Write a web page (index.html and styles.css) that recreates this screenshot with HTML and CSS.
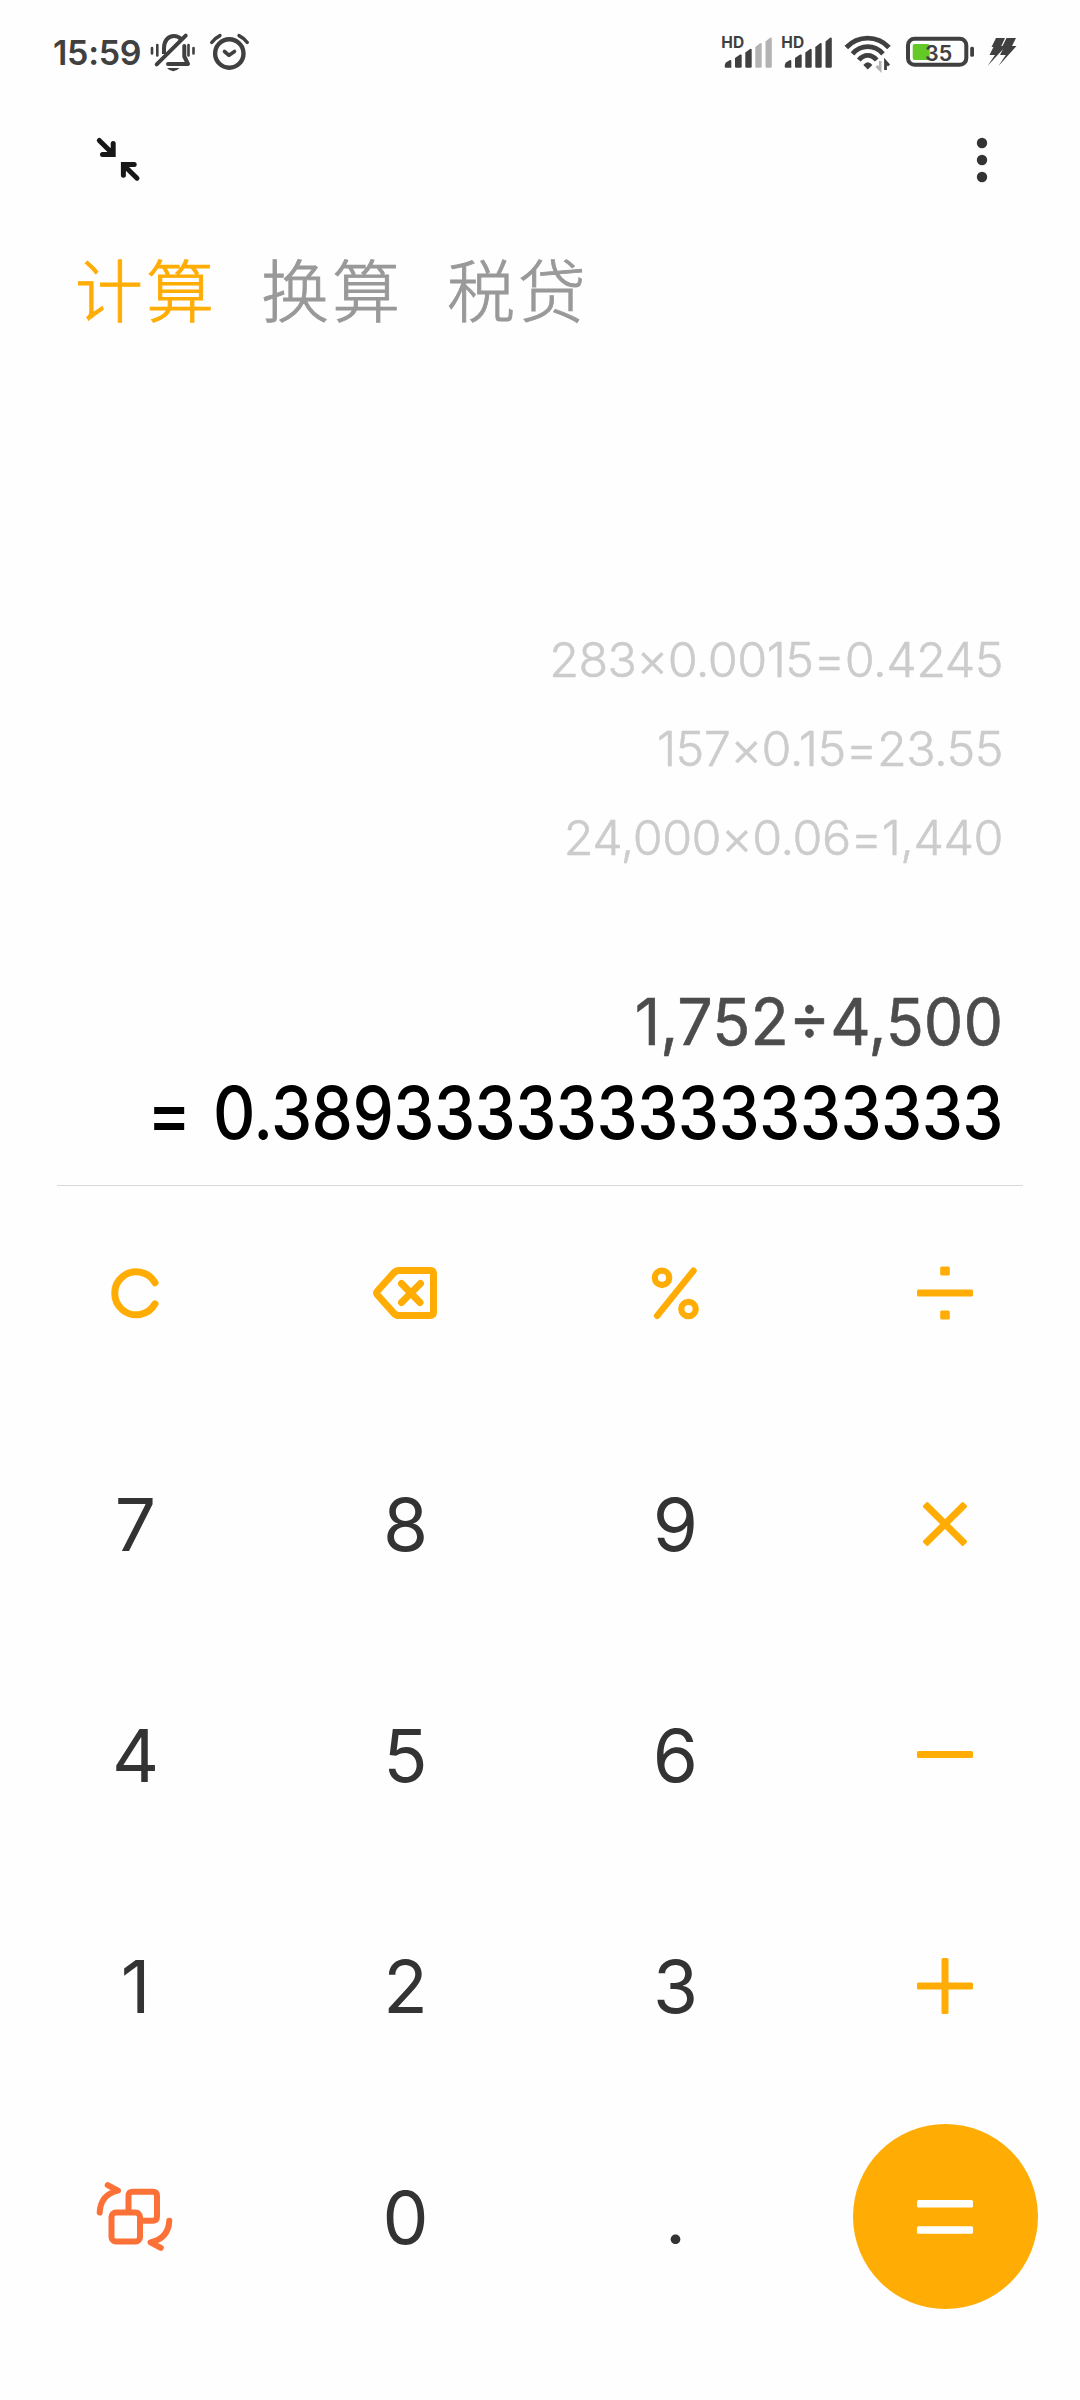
FILE: index.html
```
<!DOCTYPE html>
<html lang="zh-CN">
<head>
    <meta charset="UTF-8">
    <meta name="viewport" content="width=device-width, initial-scale=1.0">
    <title>计算器</title>
    <link rel="stylesheet" href="styles.css">
</head>
<body>
    <div class="calculadora">
        <header class="status">
            <span class="hora">15:59</span>
            <svg class="campana" width="48" height="40" viewBox="0 0 48 40" fill="none" stroke="#404040" stroke-width="4" stroke-linecap="round">
                <path d="M15 21V15C15 8 19 3 25 3C28 3 30 4 32 6" stroke-linecap="butt"/>
                <path d="M35.3 13V23.5L39 31H19" stroke-linejoin="round"/>
                <path d="M7.7 31.3L36.7 2.7"/>
                <path d="M18 35H30.5Q24.2 41.500 18 35Z" fill="#404040" stroke="none"/>
                <path d="M3 15V20.500M8.300 12V22.500M39.500 12V22.500M44.500 15V20.500" stroke-width="2.600"/>
            </svg>
            <svg class="alarma" width="42" height="40" viewBox="0 0 42 40" fill="none" stroke="#404040" stroke-width="4" stroke-linecap="round" stroke-linejoin="round">
                <circle cx="20.3" cy="20.500" r="14.200" stroke-width="4.400"/>
                <path d="M15.500 18.500L20 22.300L25.500 18.500" stroke-width="3.600"/>
                <path d="M2.700 9.500Q6 5 11 2.600M30 2.600Q35 5 38.300 9.500" stroke-width="3.400"/>
            </svg>
            <svg class="senal" width="52" height="36" viewBox="0 0 52 36" fill="#404040">
                <text class="hd" x="0.300" y="14.700">HD</text>
                <path d="M3.700 33.500Q3.700 30.500 5 29.500L8.500 27.200Q10.300 26.500 10.300 28V34.700H5Q3.700 34.700 3.700 33.500Z"/>
                <path d="M14 25L19 21.500Q20.700 21 20.700 22.500V33.500Q20.700 34.700 19.500 34.700H15.200Q14 34.700 14 33.500Z"/>
                <path d="M24.300 19.500L29 16Q30.700 15.400 30.700 17V33.500Q30.700 34.700 29.500 34.700H25.500Q24.300 34.700 24.300 33.500Z"/>
                <path class="apagada" d="M34.300 14L39 10.300Q40.700 9.600 40.700 11.500V33.500Q40.700 34.700 39.500 34.700H35.500Q34.300 34.700 34.300 33.500Z"/>
                <path class="apagada" d="M44.500 8.500L49 4.700Q50.800 4 50.800 6V33.500Q50.800 34.700 49.500 34.700H45.700Q44.500 34.700 44.500 33.500Z"/>
            </svg>
            <svg class="senal2" width="52" height="36" viewBox="0 0 52 36" fill="#404040">
                <text class="hd" x="0.300" y="14.700">HD</text>
                <path d="M3.700 33.500Q3.700 30.500 5 29.500L8.500 27.200Q10.300 26.500 10.300 28V34.700H5Q3.700 34.700 3.700 33.500Z"/>
                <path d="M14 25L19 21.500Q20.700 21 20.700 22.500V33.500Q20.700 34.700 19.500 34.700H15.200Q14 34.700 14 33.500Z"/>
                <path d="M24.300 19.500L29 16Q30.700 15.400 30.700 17V33.500Q30.700 34.700 29.500 34.700H25.500Q24.300 34.700 24.300 33.500Z"/>
                <path d="M34.300 14L39 10.300Q40.700 9.600 40.700 11.500V33.500Q40.700 34.700 39.500 34.700H35.500Q34.300 34.700 34.300 33.500Z"/>
                <path d="M44.500 8.500L49 4.700Q50.800 4 50.800 6V33.500Q50.800 34.700 49.500 34.700H45.700Q44.500 34.700 44.500 33.500Z"/>
            </svg>
            <svg class="wifi" width="48" height="40" viewBox="0 0 48 40" fill="none" stroke="#404040" stroke-width="4.800">
                <path d="M2.300 14.500C14 2 33.300 2 45 14.500"/>
                <path d="M8.500 20.800C17 11.300 30.500 11.300 39 20.800"/>
                <path d="M14.800 27C20 20.800 27.500 20.800 32.700 27"/>
                <path d="M19.300 32Q23.800 26.500 28.400 32L23.800 36.500Z" fill="#404040" stroke="none"/>
                <path d="M36.200 28V36.800L32.500 33" stroke="#b3b3b3" stroke-width="2.600"/>
                <path d="M41.500 37V28.500L45 32.500" stroke-width="2.800"/>
            </svg>
            <svg class="bateria" width="70" height="32" viewBox="0 0 70 32">
                <rect x="3" y="2.700" width="58.300" height="26" rx="6.500" fill="none" stroke="#404040" stroke-width="4"/>
                <rect x="7.700" y="8" width="17" height="16" rx="2" fill="#64c927"/>
                <rect x="65.200" y="10.700" width="3.800" height="10" rx="1.500" fill="#404040"/>
                <text class="carga" x="20" y="24.500">35</text>
            </svg>
            <svg class="rayo" width="30" height="30" viewBox="0 0 30 30" fill="#404040">
                <path d="M9 1H18L14.300 9H19L0.500 29L8 18H2.500L6.500 10H4.500Z"/>
                <path d="M19.500 1H29L25 9H29.500L11.500 29L18.800 18H13L17 10H15Z"/>
            </svg>
        </header>

        <div class="barra">
            <svg width="46" height="46" viewBox="0 0 46 46" fill="none" stroke="#171717" stroke-width="5" stroke-linecap="round" stroke-linejoin="miter">
                <path d="M4.300 3.500L17.500 16.500M18.200 6.500V17.500H7.500"/>
                <path d="M42 41.200L29 28.500M28.400 38.200V27.500H39.200"/>
            </svg>
            <svg width="12" height="46" viewBox="0 0 12 46" fill="#333">
                <circle cx="6" cy="6" r="5.200"/>
                <circle cx="6" cy="23" r="5.200"/>
                <circle cx="6" cy="40" r="5.200"/>
            </svg>
        </div>

        <nav class="pestanas">
            <span class="activa">计算</span>
            <span>换算</span>
            <span>税贷</span>
        </nav>

        <div class="pantalla">
            <div class="historial">
                <div>283×0.0015=0.4245</div>
                <div>157×0.15=23.55</div>
                <div>24,000×0.06=1,440</div>
            </div>
            <div class="expresion">1,752÷4,500</div>
            <div class="resultado"><span class="igual">=</span><span>0.389333333333333333</span></div>
        </div>

        <div class="teclado">
            <div class="tecla">
                <svg width="52" height="52" viewBox="0 0 52 52" fill="none" stroke="#ffad05" stroke-width="7" stroke-linecap="round">
                    <path d="M46 15.800A21.500 21.500 0 1 0 46 36.800"/>
                </svg>
            </div>
            <div class="tecla">
                <svg width="64" height="52" viewBox="0 0 64 52" fill="none" stroke="#ffad05" stroke-width="7" stroke-linecap="round" stroke-linejoin="round">
                    <path d="M26 3.500H57Q60.500 3.500 60.500 7V45Q60.500 48.500 57 48.500H26Q23 48.500 21 46.300L4.500 28Q2.800 26 4.500 24L21 5.700Q23 3.500 26 3.500Z"/>
                    <path d="M28.500 16.500L47 35.500M47.500 16.500L28.500 35.500"/>
                </svg>
            </div>
            <div class="tecla">
                <svg width="48" height="52" viewBox="0 0 48 52" fill="none" stroke="#ffad05">
                    <circle cx="11" cy="10.800" r="7.200" stroke-width="6.300"/>
                    <circle cx="37.500" cy="42" r="7.200" stroke-width="6.300"/>
                    <path d="M42.500 3.700L6.200 48.700" stroke-width="6.500" stroke-linecap="round"/>
                </svg>
            </div>
            <div class="tecla">
                <svg width="56" height="54" viewBox="0 0 56 54" fill="#ffad05">
                    <rect y="23.500" width="56" height="7" rx="1.500"/>
                    <rect x="23.200" y="0.500" width="9.600" height="9" rx="1.500"/>
                    <rect x="23.200" y="44.500" width="9.600" height="9" rx="1.500"/>
                </svg>
            </div>
            <div class="tecla numero">7</div>
            <div class="tecla numero">8</div>
            <div class="tecla numero">9</div>
            <div class="tecla">
                <svg width="44" height="44" viewBox="0 0 44 44" fill="#ffad05">
                    <rect x="-6.500" y="18.500" width="57" height="7" rx="1.500" transform="rotate(45 22 22)"/>
                    <rect x="-6.500" y="18.500" width="57" height="7" rx="1.500" transform="rotate(-45 22 22)"/>
                </svg>
            </div>
            <div class="tecla numero">4</div>
            <div class="tecla numero">5</div>
            <div class="tecla numero">6</div>
            <div class="tecla">
                <svg width="56" height="7" viewBox="0 0 56 7" fill="#ffad05">
                    <rect width="56" height="7" rx="1.500"/>
                </svg>
            </div>
            <div class="tecla numero">1</div>
            <div class="tecla numero">2</div>
            <div class="tecla numero">3</div>
            <div class="tecla">
                <svg width="56" height="56" viewBox="0 0 56 56" fill="#ffad05">
                    <rect y="24.500" width="56" height="7" rx="1.500"/>
                    <rect x="24.500" width="7" height="56" rx="1.500"/>
                </svg>
            </div>
            <div class="tecla">
                <svg width="78" height="70" viewBox="0 0 78 70" fill="none" stroke="#fc7138" stroke-width="6" stroke-linecap="round" stroke-linejoin="round">
                    <rect x="15.500" y="30.500" width="28.500" height="29" rx="4.500"/>
                    <path d="M32.500 29V14Q32.500 9.700 36.800 9.700H56.700Q61 9.700 61 14V34.200Q61 38.700 56.700 38.700H45"/>
                    <path d="M3.700 30.500Q4.500 12.500 22 8.600L11.700 3.200"/>
                    <path d="M73.300 38.700Q72.500 56.500 54.500 60.400L64.800 65.800"/>
                </svg>
            </div>
            <div class="tecla numero">0</div>
            <div class="tecla numero">.</div>
            <div class="tecla">
                <div class="boton-igual">
                    <svg width="56" height="34" viewBox="0 0 56 34" fill="#fff">
                        <rect width="56" height="7.600" rx="1.500"/>
                        <rect y="26.200" width="56" height="7.600" rx="1.500"/>
                    </svg>
                </div>
            </div>
        </div>
    </div>
</body>
</html>
```
FILE: styles.css
```
body {
    margin: 0;
    background-color: #fefefe;
    font-family: Inter, "Noto Sans CJK SC", sans-serif;
}
.calculadora {
    width: 1080px;
    height: 2400px;
    overflow: hidden;
}
svg {
    display: block;
    flex-shrink: 0;
    overflow: visible;
}

/* barra de estado */
.status {
    display: flex;
    align-items: flex-start;
    height: 72px;
    padding: 33px 63px 0 53px;
    box-sizing: border-box;
}
.hora {
    width: 96px;
    line-height: 39px;
    font-size: 34px;
    font-weight: 600;
    letter-spacing: -0.3px;
    color: #404040;
}
.alarma {
    margin-left: 12px;
}
.senal {
    margin-left: auto;
}
.senal2 {
    margin-left: 8px;
}
.wifi {
    margin-left: 11px;
}
.bateria {
    margin-left: 13px;
    margin-top: 3px;
}
.rayo {
    margin-left: 12px;
    margin-top: 4px;
}
.hd {
    font-size: 15.5px;
    font-weight: 700;
}
.apagada {
    fill: #b3b3b3;
}
.carga {
    font-size: 21.5px;
    font-weight: 600;
    fill: #404040;
}

/* iconos de arriba y pestañas */
.barra {
    display: flex;
    justify-content: space-between;
    padding: 65px 92px 0 95px;
}
.pestanas {
    display: flex;
    gap: 44px;
    padding: 54px 0 2px 75px;
    height: 101px;
    line-height: 101px;
    font-family: "Noto Sans CJK SC", sans-serif;
    font-size: 68px;
    font-weight: 300;
    letter-spacing: 3px;
    color: #999;
    -webkit-text-stroke: 0.9px #999;
}
.activa {
    color: #ffad05;
    -webkit-text-stroke-color: #ffad05;
}

/* pantalla */
.pantalla {
    margin: 0 57px;
    padding: 275px 20px 0 0;
    height: 570px;
    border-bottom: 1px solid #d9d9d9;
    text-align: right;
    white-space: nowrap;
}
.historial {
    font-size: 48.5px;
    font-weight: 300;
    letter-spacing: -0.5px;
    line-height: 89px;
    color: #ccc;
    -webkit-text-stroke: 0.5px #ccc;
}
.expresion {
    margin-top: 95px;
    line-height: 90px;
    font-size: 65px;
    font-weight: 400;
    color: #4c4c4c;
    -webkit-text-stroke: 0.6px #4c4c4c;
    transform: scaleX(0.965);
    transform-origin: right;
}
.resultado {
    display: flex;
    justify-content: flex-end;
    line-height: 92px;
    font-size: 73px;
    font-weight: 500;
    letter-spacing: -0.6px;
    color: #000;
    transform: scaleX(0.9);
    transform-origin: right;
}
.igual {
    margin-right: 25px;
}

/* teclado */
.teclado {
    display: grid;
    grid-template-columns: repeat(4, 270px);
    grid-auto-rows: 185px;
    row-gap: 46px;
    padding-top: 14px;
}
.tecla {
    display: flex;
    justify-content: center;
    align-items: center;
}
.numero {
    padding: 2px 0 0 1px;
    line-height: 91px;
    font-size: 73px;
    font-weight: 400;
    color: #333;
}
.boton-igual {
    display: flex;
    justify-content: center;
    align-items: center;
    width: 185px;
    height: 185px;
    border-radius: 50%;
    background-color: #ffad05;
}
```
